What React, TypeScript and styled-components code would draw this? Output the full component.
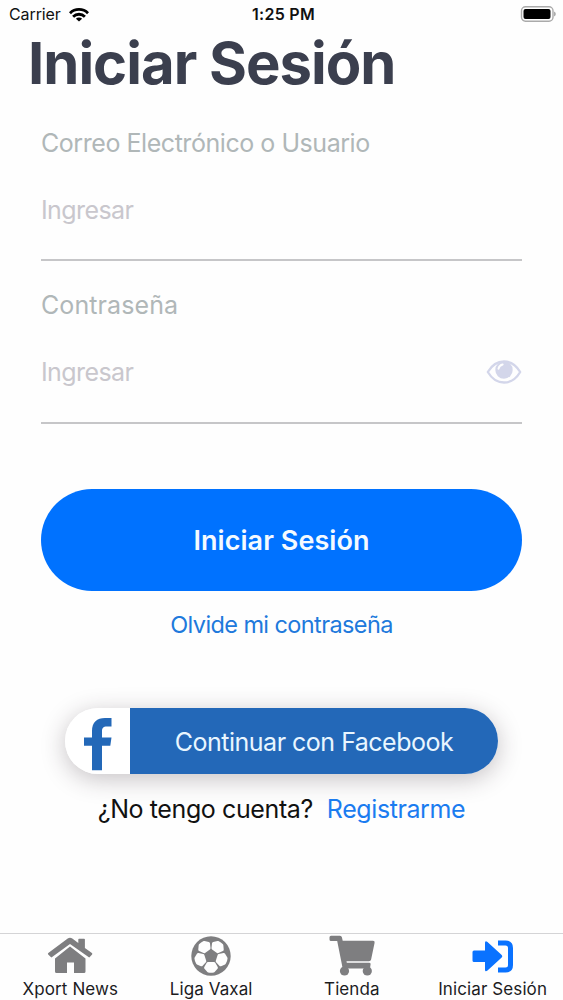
import React from 'react';
import styled, { createGlobalStyle } from 'styled-components';

const GlobalStyle = createGlobalStyle`
  * { box-sizing: border-box; }
  body { margin: 0; background: #fefefe; font-family: Inter, "Liberation Sans", sans-serif; }
  button { border: 0; padding: 0; background: none; font: inherit; }
`;

const Screen = styled.div`
  width: 563px;
  height: 1000px;
  display: flex;
  flex-direction: column;
  overflow: hidden;
  background: #fefefe;
`;

const StatusBar = styled.header`
  display: grid;
  grid-template-columns: 1fr auto 1fr;
  align-items: center;
  height: 29px;
  padding: 0 7px 0 9px;
  font-size: 16px;
  line-height: 29px;
  color: #111;
`;

const Carrier = styled.div`
  display: flex;
  align-items: center;
  gap: 8px;
  letter-spacing: -0.1px;
`;

const Clock = styled.div`
  font-weight: 600;
  padding-left: 2px;
  letter-spacing: 0.3px;
`;

const BatteryIcon = styled.svg`
  justify-self: end;
`;

const Title = styled.h1`
  margin: 0;
  padding-left: 28px;
  height: 68px;
  font-size: 58px;
  line-height: 68px;
  font-weight: 700;
  letter-spacing: -1px;
  color: #3b3f4e;
  white-space: nowrap;
`;

const Form = styled.form`
  display: flex;
  flex-direction: column;
  padding: 26px 41px 0;
`;

const Field = styled.div`
  display: flex;
  flex-direction: column;
  height: 162px;
`;

const Label = styled.label<{ $spacing: number }>`
  height: 40px;
  font-size: 25px;
  line-height: 40px;
  color: #b0b7b8;
  letter-spacing: ${(p) => p.$spacing}px;
`;

const Entry = styled.div<{ $height: number }>`
  display: flex;
  flex: none;
  align-items: center;
  justify-content: space-between;
  height: ${(p) => p.$height}px;
  padding-bottom: 3px;
  border-bottom: 2px solid #c6c6c8;
  font-size: 25px;
  letter-spacing: -0.6px;
  color: #c9c7cd;
`;

const SubmitButton = styled.button`
  height: 102px;
  margin-top: 42px;
  border-radius: 51px;
  background: #0072ff;
  color: #f4faff;
  font-size: 27px;
  font-weight: 600;
  letter-spacing: 0.05px;
`;

const ForgotLink = styled.a`
  height: 40px;
  margin-top: 14px;
  text-align: center;
  font-size: 23.5px;
  line-height: 40px;
  letter-spacing: -0.6px;
  color: #2079dc;
`;

const FacebookButton = styled.button`
  display: flex;
  width: 433px;
  height: 66px;
  margin: 63px auto 0;
  border-radius: 33px;
  overflow: hidden;
  background: linear-gradient(90deg, #fff 65px, #2368b8 65px);
  box-shadow: 0 5px 24px rgba(50, 35, 45, 0.28);
`;

const FacebookMark = styled.span`
  display: flex;
  flex: none;
  width: 65px;
  height: 66px;
`;

const FacebookText = styled.span`
  flex: 1;
  text-align: center;
  font-size: 25px;
  line-height: 68px;
  letter-spacing: -0.5px;
  color: #e9f6ff;
`;

const SignupRow = styled.p`
  display: flex;
  justify-content: center;
  gap: 14px;
  height: 40px;
  margin: 15px 0 0;
  font-size: 25px;
  line-height: 40px;
  letter-spacing: -0.4px;
  color: #111;
`;

const SignupLink = styled.a`
  color: #1b7cf0;
`;

const TabBar = styled.nav`
  display: grid;
  grid-template-columns: repeat(4, 1fr);
  height: 67px;
  margin-top: auto;
  border-top: 1px solid #d4d4d6;
`;

const Tab = styled.a<{ $active?: boolean }>`
  display: flex;
  flex-direction: column;
  align-items: center;
  color: #1c1c1e;
  font-size: 17px;
  line-height: 20px;
  letter-spacing: 0.1px;
  white-space: nowrap;
  svg { flex: none; color: ${(p) => (p.$active ? '#0a72ff' : '#7e7e80')}; }
`;

const WifiIcon = () => (
  <svg width="20" height="14" viewBox="0 0 20 14" fill="none" stroke="#000" strokeWidth="2.8">
    <path d="M1 5.200a12.700 12.700 0 0 1 18 0" />
    <path d="M4.100 8.700a8.300 8.300 0 0 1 11.800 0" />
    <path d="M10 13.600L6.900 10.700a4.400 4.400 0 0 1 6.200 0z" fill="#000" stroke="none" />
  </svg>
);

const EyeIcon = () => (
  <svg width="36" height="24" viewBox="0 0 36 24">
    <path d="M1.800 12Q8 1.500 18 1.500T34.200 12Q28 22.500 18 22.500T1.800 12z" fill="none" stroke="#d3d6ea" strokeWidth="2.300" strokeLinejoin="round" />
    <circle cx="18" cy="10" r="8.700" fill="#d3d6ea" />
    <path d="M12.500 8.700q.7-3.500 4.200-4.200" fill="none" stroke="#fefefe" strokeWidth="1.900" strokeLinecap="round" />
  </svg>
);

const HomeIcon = () => (
  <svg width="46" height="45" viewBox="0 0 46 45" fill="currentColor">
    <path d="M8 24.500L23 12.500l15.500 12V37.500q0 1.500-1.500 1.500H27V28.500h-7V39H9.500Q8 39 8 37.500z" />
    <path d="M3.800 23L1.200 20.400Q.5 19.600 1.300 18.900L20.700 4.600q2.300-1.700 4.600 0l6 4.400V5.500q0-.8.800-.8h5q.8 0 .8.800v8.600l7 5q.8.600.2 1.400l-2.300 2.500q-.6.700-1.300.1L23 10 5.100 23.100q-.7.600-1.300-.1z" />
  </svg>
);

const BallIcon = () => (
  <svg width="40" height="45" viewBox="0 0 40 45">
    <circle cx="20" cy="22" r="19.700" fill="currentColor" />
    <g fill="#fefefe" stroke="#fefefe" strokeWidth="3" strokeLinejoin="round">
      {[0, 72, 144, 216, 288].map((angle) => (
        <path key={angle} transform={`rotate(${angle} 20 22)`} d="M17 29.500h6l2.400 4.200-2.900 3.300q-2.500.6-5 0l-2.900-3.300z" />
      ))}
    </g>
  </svg>
);

const CartIcon = () => (
  <svg width="46" height="45" viewBox="0 0 46 45" fill="currentColor">
    <path d="M2 1.800h9q1.500 0 1.900 1.500l.8 3.400H44q2 0 1.600 2l-3.500 16.700q-.4 1.800-2.100 1.800H17.500l.3 1.600h22.600q1.500 0 1.200 1.500l-.4 2.700q-.3 1.500-2 1.500H15.200q-1.500 0-1.800-1.500L8.200 7H2Q.5 7 .5 5.500V3.300Q.5 1.800 2 1.800z" />
    <circle cx="15.500" cy="37" r="4.600" />
    <circle cx="38.300" cy="37" r="4.600" />
  </svg>
);

const LoginIcon = () => (
  <svg width="42" height="45" viewBox="0 0 42 45" fill="currentColor">
    <path d="M2 16.500h11V9q0-3 2.500-1.100L29.700 21q1.300 1.200 0 2.400L15.500 36.600Q13 38.500 13 35.500V28H2q-1.500 0-1.500-1.500V18q0-1.500 1.500-1.500z" />
    <path d="M26 9h7.500q5 0 5 5v17q0 5-5 5H26" fill="none" stroke="currentColor" strokeWidth="5" />
  </svg>
);

export default function App() {
  return (
    <>
      <GlobalStyle />
      <Screen>
        <StatusBar>
          <Carrier><span>Carrier</span><WifiIcon /></Carrier>
          <Clock>1:25 PM</Clock>
          <BatteryIcon width="36" height="17" viewBox="0 0 36 17">
            <rect x="1.500" y=".8" width="31.500" height="14.400" rx="4" fill="#fff" stroke="#aaa" strokeWidth="1.400" />
            <rect x="3.500" y="3" width="27" height="10" rx="2" fill="#000" />
            <path d="M34.200 5.500v5q1.500-.8 1.500-2.500T34.200 5.500z" fill="#999" />
          </BatteryIcon>
        </StatusBar>
        <Title>Iniciar Sesión</Title>
        <Form>
          <Field>
            <Label $spacing={-0.45}><span>Correo Electrónico o Usuario</span></Label>
            <Entry $height={98}><span>Ingresar</span></Entry>
          </Field>
          <Field>
            <Label $spacing={0.1}><span>Contraseña</span></Label>
            <Entry $height={99}><span>Ingresar</span><EyeIcon /></Entry>
          </Field>
          <SubmitButton type="button"><span>Iniciar Sesión</span></SubmitButton>
          <ForgotLink><span>Olvide mi contraseña</span></ForgotLink>
          <FacebookButton type="button">
            <FacebookMark>
              <svg width="65" height="66" viewBox="0 0 65 66">
                <path d="M27 62.300V37.700h-8v-8.200h8v-6.300C27 14 32 10 40 10h6.500v8.500H42c-4 0-5 1.800-5 5v6h9.500l-1.200 8.200H37v24.600z" fill="#2368b8" />
              </svg>
            </FacebookMark>
            <FacebookText><span>Continuar con Facebook</span></FacebookText>
          </FacebookButton>
          <SignupRow><span>¿No tengo cuenta?</span><SignupLink>Registrarme</SignupLink></SignupRow>
        </Form>
        <TabBar>
          <Tab><HomeIcon /><span>Xport News</span></Tab>
          <Tab><BallIcon /><span>Liga Vaxal</span></Tab>
          <Tab><CartIcon /><span>Tienda</span></Tab>
          <Tab $active><LoginIcon /><span>Iniciar Sesión</span></Tab>
        </TabBar>
      </Screen>
    </>
  );
}
